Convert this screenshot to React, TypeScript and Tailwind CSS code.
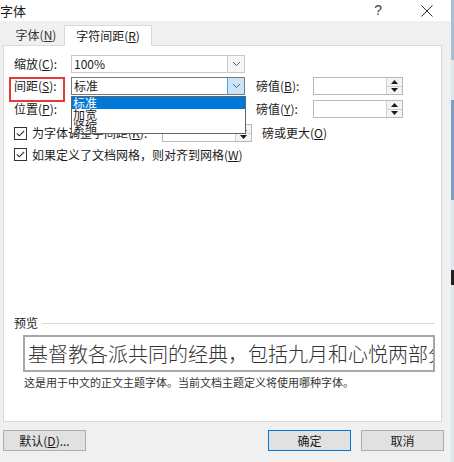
import React from "react";

const cjk = "font-['Noto_Sans_CJK_SC','Noto_Sans',sans-serif]";

const Chevron = () => (
  <svg width="9" height="6" viewBox="0 0 9 6" className="block">
    <path d="M1 1 L4.5 4.5 L8 1" fill="none" stroke="#606060" strokeWidth="1" />
  </svg>
);

const Combo = ({ value, focus }: { value?: string; focus?: boolean }) => (
  <div
    className={`flex h-[18px] w-[174px] items-center border bg-white ${
      focus ? "border-[#7a7a7a]" : "border-[#c8c8c8]"
    }`}
  >
    <span className="flex-1 pl-[2px] text-[12px] leading-none text-[#1a1a1a]">{value}</span>
    <div
      className={`flex h-full w-[17px] items-center justify-center border-l ${
        focus ? "border-[#569de5] bg-[#cce4f7]" : "border-[#c8c8c8] bg-[#f6f6f6]"
      }`}
    >
      <Chevron />
    </div>
  </div>
);

const Spin = ({ w = "w-[90px]" }: { w?: string }) => (
  <div className={`flex h-[18px] ${w} border border-[#b9b9b9] bg-white`}>
    <div className="flex-1" />
    <div className="flex w-[16px] flex-col border-l border-[#d0d0d0] bg-[#f4f4f4]">
      <div className="flex flex-1 items-center justify-center border-b border-[#d0d0d0]">
        <svg width="7" height="4" viewBox="0 0 7 4">
          <path d="M0 4 L3.5 0 L7 4 Z" fill="#1a1a1a" />
        </svg>
      </div>
      <div className="flex flex-1 items-center justify-center">
        <svg width="7" height="4" viewBox="0 0 7 4">
          <path d="M0 0 L3.5 4 L7 0 Z" fill="#1a1a1a" />
        </svg>
      </div>
    </div>
  </div>
);

const Check = () => (
  <div className="flex h-[13px] w-[13px] items-center justify-center border border-[#333] bg-white">
    <svg width="9" height="7" viewBox="0 0 9 7">
      <path d="M0.8 3.4 L3.3 5.8 L8.2 0.8" fill="none" stroke="#222" strokeWidth="1.1" />
    </svg>
  </div>
);

const Btn = ({ children, primary }: { children: React.ReactNode; primary?: boolean }) => (
  <div
    className={`flex h-[21px] w-[83px] items-center justify-center text-[12px] text-[#1a1a1a] ${
      primary ? "border border-[#0078d7] bg-[#e1e1e1]" : "border border-[#adadad] bg-[#e1e1e1]"
    }`}
  >
    {children}
  </div>
);

export default function App() {
  return (
    <div className={`flex h-[462px] w-[454px] overflow-hidden bg-[#f0f0f0] ${cjk} text-[#1a1a1a]`}>
      <div className="flex w-[451px] flex-col">
        {/* title bar */}
        <div className="flex h-[21px] items-center bg-white">
          <span className="text-[13px] leading-none">字体</span>
          <span className="ml-auto mr-[39px] font-['Segoe_UI','Liberation_Sans',sans-serif] text-[14px] text-[#444]">?</span>
          <svg width="12" height="12" viewBox="0 0 12 12" className="mr-[18px]">
            <path d="M0.5 0.5 L11.5 11.5 M11.5 0.5 L0.5 11.5" stroke="#333" strokeWidth="1" />
          </svg>
        </div>

        <div className="flex flex-1 flex-col px-[3px]">
          {/* tabs */}
          <div className="flex h-[24px] items-end pl-[2px]">
            <div className="mb-[1px] flex h-[19px] w-[59px] items-center justify-center pl-[3px] text-[12px] leading-none text-[#333]">
              字体(<u>N</u>)
            </div>
            <div className="relative -mb-[1px] z-10 flex h-[21px] w-[88px] items-center justify-center border border-b-0 border-[#d9d9d9] bg-white text-[12px] leading-none">
              字符间距(<u>R</u>)
            </div>
          </div>

          {/* panel */}
          <div className="relative h-[377px] w-[439px] border border-[#d9d9d9] bg-white pl-[10px] text-[12px]">
            <div className="mt-[9px] flex items-center">
              <span className="w-[57px]">缩放(<u>C</u>):</span>
              <Combo value="100%" />
            </div>
            <div className="mt-[4px] flex items-center">
              <span className="w-[57px]">间距(<u>S</u>):</span>
              <Combo value="标准" focus />
              <span className="ml-[11px] w-[57px]">磅值(<u>B</u>):</span>
              <Spin />
            </div>
            <div className="mt-[5px] flex items-center">
              <span className="w-[57px]">位置(<u>P</u>):</span>
              <Combo value="" />
              <span className="ml-[11px] w-[57px]">磅值(<u>Y</u>):</span>
              <Spin />
            </div>
            <div className="mt-[6px] flex items-center">
              <Check />
              <span className="ml-[5px] w-[130px] leading-none">为字体调整字间距(<u>K</u>):</span>
              <Spin />
              <span className="ml-[10px]">磅或更大(<u>O</u>)</span>
            </div>
            <div className="mt-[6px] flex items-center">
              <Check />
              <span className="ml-[5px] leading-none">如果定义了文档网格，则对齐到网格(<u>W</u>)</span>
            </div>

            {/* preview */}
            <div className="mt-[153px] flex items-center pr-[6px]">
              <span>预览</span>
              <div className="ml-[4px] h-px flex-1 bg-[#dcdcdc]" />
            </div>
            <div className="ml-[9px] mt-[3px] flex h-[37px] w-[412px] items-center overflow-hidden whitespace-nowrap border-2 border-[#a8a8a8] pl-[3px] text-[20px] font-light text-[#333]">
              基督教各派共同的经典，包括九月和心悦两部分
            </div>
            <div className="ml-[10px] mt-[2px] text-[11px] text-[#333]">
              这是用于中文的正文主题字体。当前文档主题定义将使用哪种字体。
            </div>

            {/* red highlight on 间距 label */}
            <div className="absolute left-[5px] top-[31px] h-[25px] w-[56px] border-2 border-[#e5393a]" />

            {/* open dropdown list */}
            <div className="absolute left-[67px] top-[50px] z-20 flex w-[175px] flex-col border border-[#646464] bg-white text-[12px] leading-[12px]">
              <div className="h-[12px] bg-[#0078d7] pl-[1px] text-white">标准</div>
              <div className="h-[12px] pl-[1px]">加宽</div>
              <div className="h-[12px] pl-[1px]">紧缩</div>
            </div>
          </div>

          {/* buttons */}
          <div className="mt-[8px] flex">
            <Btn>
              默认(<u>D</u>)...
            </Btn>
            <div className="ml-auto flex gap-[10px] pr-[4px]">
              <Btn primary>确定</Btn>
              <Btn>取消</Btn>
            </div>
          </div>
        </div>
      </div>

      {/* background strip */}
      <div className="flex w-[3px] flex-col bg-[#dfe6ee]">
        <div className="h-[60px] bg-[#a9bdd6]" />
        <div className="h-[40px]" />
        <div className="h-[100px] bg-[#7d9fc6]" />
        <div className="h-[70px]" />
        <div className="h-[15px] bg-[#222]" />
        <div className="flex-1" />
      </div>
    </div>
  );
}
